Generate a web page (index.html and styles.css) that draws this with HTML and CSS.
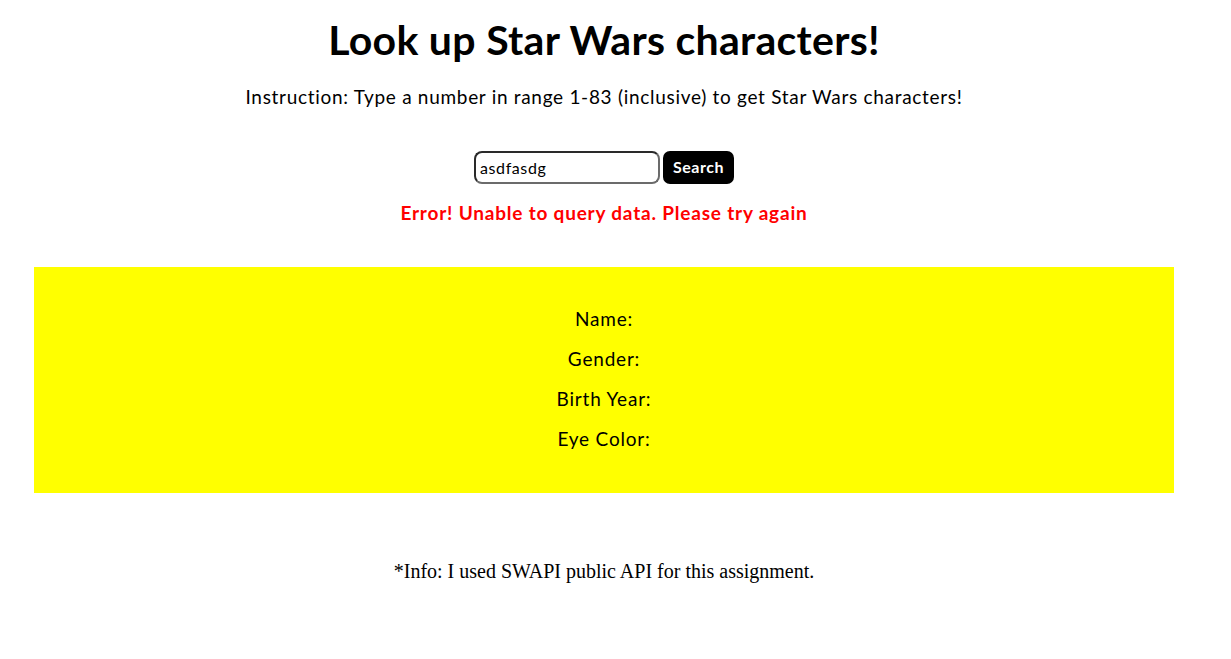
FILE: index.html
```html
<!DOCTYPE html>
<html lang="en">
<head>
<meta charset="utf-8">
<title>Star Wars Lookup</title>
<link rel="stylesheet" href="styles.css">
</head>
<body>
<div class="page">
  <h1 class="title">Look up Star Wars characters!</h1>
  <p class="instruction">Instruction: Type a number in range 1-83 (inclusive) to get Star Wars characters!</p>
  <form class="search">
    <input class="search-input" type="text" value="asdfasdg">
    <button class="search-btn" type="button">Search</button>
  </form>
  <p class="error">Error! Unable to query data. Please try again</p>
  <section class="result">
    <p class="row">Name:</p>
    <p class="row">Gender:</p>
    <p class="row">Birth Year:</p>
    <p class="row">Eye Color:</p>
  </section>
  <p class="info">*Info: I used SWAPI public API for this assignment.</p>
</div>
</body>
</html>
```
FILE: styles.css
```css
html, body {
  margin: 0;
  padding: 0;
  background: #fff;
}
.page {
  width: 1208px;
  font-family: "Lato", "Noto Sans", sans-serif;
  color: #000;
  text-align: center;
  display: flex;
  flex-direction: column;
  align-items: center;
}
.title {
  margin: 16px 0 0;
  font-size: 41px;
  line-height: 48px;
  font-weight: 700;
  letter-spacing: 0.3px;
}
.instruction {
  margin: 21px 0 0;
  font-size: 19px;
  line-height: 24px;
  letter-spacing: 0.7px;
}
.search {
  margin-top: 42px;
  display: flex;
  gap: 3px;
  height: 33px;
}
.search-input {
  box-sizing: border-box;
  width: 186px;
  height: 33px;
  border: 2px solid #6b6b6b;
  border-top-color: #2a2a2a;
  border-left-color: #2a2a2a;
  border-radius: 8px;
  padding: 0 4px;
  font-family: inherit;
  font-size: 16px;
  letter-spacing: 0.6px;
  color: #000;
  outline: none;
}
.search-btn {
  box-sizing: border-box;
  width: 71px;
  height: 33px;
  border: none;
  border-radius: 7px;
  background: #000;
  color: #fff;
  font-family: inherit;
  font-size: 16px;
  font-weight: 700;
  letter-spacing: 0.5px;
  padding: 0 0 2px;
}
.error {
  margin: 17px 0 0;
  font-size: 19px;
  line-height: 24px;
  font-weight: 700;
  letter-spacing: 0.8px;
  color: #ff0000;
}
.result {
  align-self: stretch;
  margin: 42px 34px 0;
  padding: 32px 0 34px;
  background: #ffff00;
}
.row {
  margin: 0;
  font-size: 19px;
  line-height: 40px;
  letter-spacing: 0.8px;
}
.info {
  margin: 66px 0 0;
  font-family: "Liberation Serif", "Times New Roman", serif;
  font-size: 20px;
  line-height: 24px;
}
```
